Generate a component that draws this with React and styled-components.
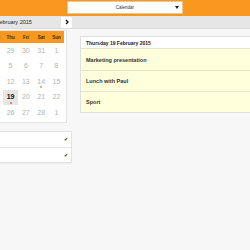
import React from "react";
import styled, { createGlobalStyle } from "styled-components";

const ORANGE = "#f9981f";

const Global = createGlobalStyle`
  html, body { margin: 0; padding: 0; }
  body {
    background: #f7f7f7;
    font-family: "Liberation Sans", Arial, sans-serif;
    overflow: hidden;
    width: 250px;
    height: 250px;
  }
  * { box-sizing: border-box; }
`;

const Page = styled.div`
  width: 250px;
  height: 250px;
  overflow: hidden;
  display: flex;
  flex-direction: column;
`;

const TopBar = styled.div`
  height: 16px;
  background: ${ORANGE};
  display: flex;
  justify-content: center;
  align-items: flex-start;
  padding-top: 1px;
`;

const Select = styled.div`
  width: 116px;
  height: 13px;
  background: #fff;
  border: 1px solid #e6c79c;
  border-radius: 1px;
  display: flex;
  align-items: center;
  justify-content: center;
  position: relative;
  font-size: 4.5px;
  color: #333;
`;

const Caret = styled.span`
  position: absolute;
  right: 3px;
  top: 4px;
  width: 0;
  height: 0;
  border-left: 2px solid transparent;
  border-right: 2px solid transparent;
  border-top: 3px solid #222;
`;

const NavBar = styled.div`
  height: 13px;
  background: #e6e6e6;
  border-bottom: 1px solid #dcdcdc;
  display: flex;
  align-items: center;
`;

const NavGroup = styled.div`
  margin-left: -46px;
  width: 118px;
  display: flex;
  align-items: center;
  gap: 3px;
`;

const NavButton = styled.div`
  width: 11px;
  height: 11px;
  background: #fff;
  border-radius: 1px;
  display: flex;
  align-items: center;
  justify-content: center;
`;

const MonthTitle = styled.div`
  flex: 1;
  text-align: center;
  font-size: 5.5px;
  color: #222;
  padding-left: 2px;
`;

const Content = styled.div`
  display: flex;
  align-items: flex-start;
  gap: 13px;
  padding-top: 1px;
`;

const LeftCol = styled.div`
  margin-left: -46px;
  width: 113px;
  flex-shrink: 0;
  display: flex;
  flex-direction: column;
`;

const CalPanel = styled.div`
  background: #fff;
  border: 1px solid #e4e4e4;
  padding: 0 2px 1px 2px;
`;

const Grid = styled.div`
  display: grid;
  grid-template-columns: repeat(7, 15.3px);
  grid-auto-rows: 15.5px;
`;

const DayHead = styled.div`
  display: grid;
  grid-template-columns: repeat(7, 15.3px);
  height: 12px;
  background: ${ORANGE};
  align-items: center;
  justify-items: center;
  font-size: 4.5px;
  font-weight: bold;
  color: #3a2a10;
`;

const Cell = styled.div`
  position: relative;
  display: flex;
  align-items: center;
  justify-content: center;
  font-size: 7px;
  padding-bottom: 1px;
  color: ${(p) => (p.$selected ? "#111" : "#b3b3b3")};
  font-weight: ${(p) => (p.$selected ? "bold" : "normal")};
  background: ${(p) => (p.$selected ? "#e6e6e6" : "transparent")};
`;

const Dot = styled.span`
  position: absolute;
  left: 50%;
  bottom: 1.5px;
  width: 2px;
  height: 2px;
  margin-left: -1px;
  border-radius: 50%;
  background: ${(p) => p.$color};
`;

const List = styled.div`
  margin-top: 8px;
  margin-right: -5px;
  background: #fff;
  border: 1px solid #e2e2e2;
  box-shadow: 0 1px 1px rgba(0, 0, 0, 0.04);
`;

const ListRow = styled.div`
  height: 15px;
  display: flex;
  align-items: center;
  justify-content: flex-end;
  padding-right: 3px;
  font-size: 5px;
  color: #222;
  & + & {
    border-top: 1px solid #e6e6e6;
  }
`;

const RightCol = styled.div`
  flex: 1;
  margin-top: 6px;
  margin-right: -10px;
  border: 1px solid #e0e0e0;
  background: #fff;
`;

const DayHeader = styled.div`
  height: 12px;
  display: flex;
  align-items: center;
  padding-left: 5px;
  font-size: 5px;
  font-weight: bold;
  color: #222;
  border-bottom: 1px solid #e4e4cc;
`;

const Event = styled.div`
  height: 21px;
  display: flex;
  align-items: center;
  padding-left: 5px;
  background: #ffffdc;
  font-size: 5.5px;
  font-weight: bold;
  color: #333;
  & + & {
    border-top: 1px solid #e6e6cf;
  }
`;

const days = ["Mon", "Tue", "Wed", "Thu", "Fri", "Sat", "Sun"];
const dates = [
  26, 27, 28, 29, 30, 31, 1,
  2, 3, 4, 5, 6, 7, 8,
  9, 10, 11, 12, 13, 14, 15,
  16, 17, 18, 19, 20, 21, 22,
  23, 24, 25, 26, 27, 28, 1,
];

export default function App() {
  return (
    <>
      <Global />
      <Page>
        <TopBar>
          <Select>
            Calendar
            <Caret />
          </Select>
        </TopBar>
        <NavBar>
          <NavGroup>
            <NavButton />
            <MonthTitle>February 2015</MonthTitle>
            <NavButton>
              <svg width="6" height="6" viewBox="0 0 6 6">
                <path d="M2 1 L4 3 L2 5" fill="none" stroke="#111" strokeWidth="1.3" />
              </svg>
            </NavButton>
          </NavGroup>
        </NavBar>
        <Content>
          <LeftCol>
            <CalPanel>
              <DayHead>
                {days.map((d) => (
                  <span key={d}>{d}</span>
                ))}
              </DayHead>
              <Grid>
                {dates.map((d, i) => (
                  <Cell key={i} $selected={i === 24}>
                    {d}
                    {i === 19 && <Dot $color="#f39a2c" />}
                    {i === 24 && <Dot $color="#e8623a" />}
                  </Cell>
                ))}
              </Grid>
            </CalPanel>
            <List>
              <ListRow>✔</ListRow>
              <ListRow>✔</ListRow>
            </List>
          </LeftCol>
          <RightCol>
            <DayHeader>Thursday 19 February 2015</DayHeader>
            <Event>Marketing presentation</Event>
            <Event>Lunch with Paul</Event>
            <Event>Sport</Event>
          </RightCol>
        </Content>
      </Page>
    </>
  );
}
